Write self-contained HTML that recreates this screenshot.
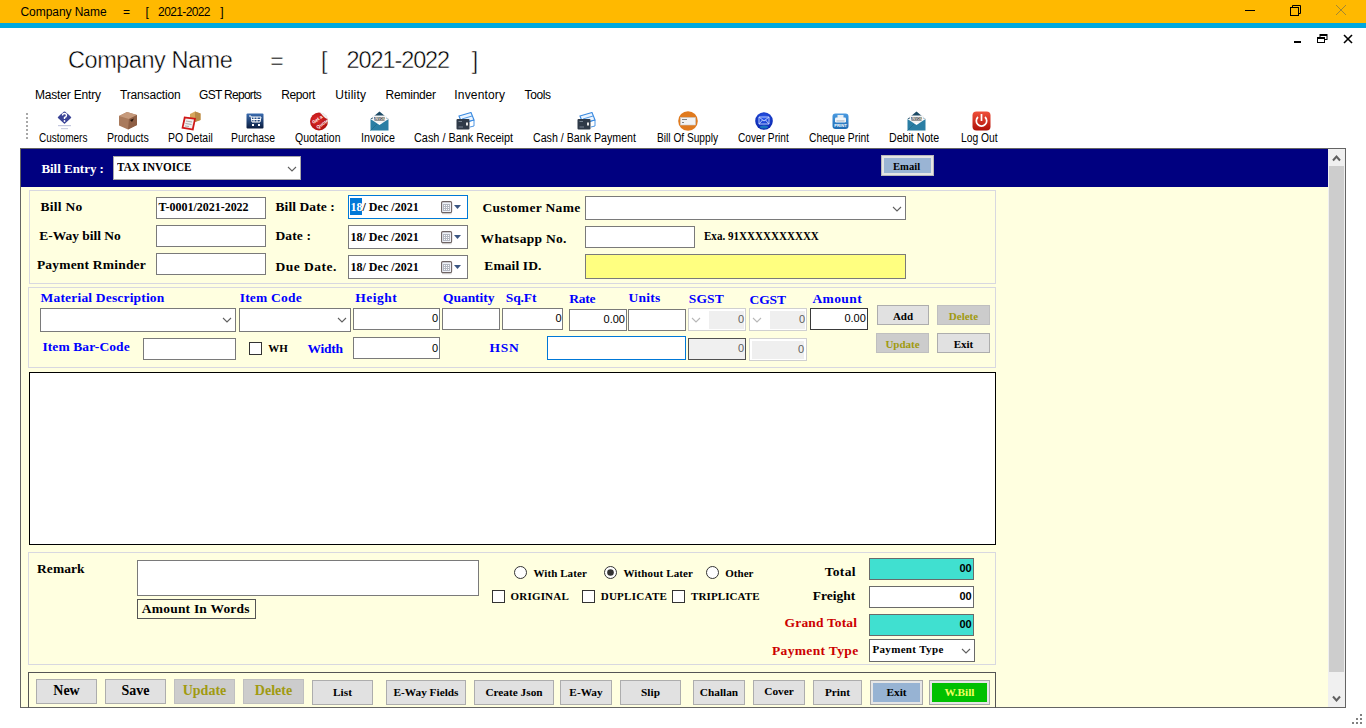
<!DOCTYPE html>
<html><head><meta charset="utf-8"><title>Bill Entry</title>
<style>
html,body{margin:0;padding:0;}
body{width:1366px;height:728px;position:relative;overflow:hidden;background:#fff;font-family:'Liberation Sans', sans-serif;}
.t{position:absolute;line-height:1;white-space:pre;}
.r{position:absolute;box-sizing:border-box;}
</style></head><body>
<div class="r" style="left:0px;top:0px;width:1366px;height:23px;background:#ffb900;"></div>
<div class="r" style="left:0px;top:23px;width:1366px;height:5px;background:#00a8de;"></div>
<div class="t" style="left:20.50px;top:5.84px;font-size:12px;font-family:'Liberation Sans', sans-serif;color:#000;letter-spacing:-0.057px;">Company Name</div>
<div class="t" style="left:123.00px;top:5.84px;font-size:12px;font-family:'Liberation Sans', sans-serif;color:#000;">=</div>
<div class="t" style="left:145.50px;top:5.84px;font-size:12px;font-family:'Liberation Sans', sans-serif;color:#000;">[</div>
<div class="t" style="left:158.10px;top:5.84px;font-size:12px;font-family:'Liberation Sans', sans-serif;color:#000;letter-spacing:-0.627px;">2021-2022</div>
<div class="t" style="left:220.20px;top:5.84px;font-size:12px;font-family:'Liberation Sans', sans-serif;color:#000;">]</div>
<div class="r" style="left:1245px;top:10px;width:10px;height:1px;background:#000;"></div>
<svg class="r" style="left:1289px;top:4px" width="13" height="13"><rect x="1.5" y="3.5" width="8" height="8" fill="none" stroke="#000" stroke-width="1"/><polyline points="3.5,3.5 3.5,1.5 11.5,1.5 11.5,9.5 9.5,9.5" fill="none" stroke="#000" stroke-width="1"/></svg>
<svg class="r" style="left:1335px;top:4px" width="12" height="12"><line x1="1" y1="1" x2="11" y2="11" stroke="#8a7a40" stroke-width="0.8"/><line x1="11" y1="1" x2="1" y2="11" stroke="#8a7a40" stroke-width="0.8"/></svg>
<div class="r" style="left:1294px;top:41px;width:7px;height:2px;background:#000;"></div>
<svg class="r" style="left:1317px;top:34px" width="11" height="9"><rect x="3" y="0.5" width="7" height="5" fill="#fff" stroke="#000" stroke-width="1"/><rect x="3" y="0" width="7" height="2" fill="#000"/><rect x="0.5" y="3.5" width="7" height="5" fill="#fff" stroke="#000" stroke-width="1"/><rect x="0.5" y="3" width="7" height="2" fill="#000"/></svg>
<svg class="r" style="left:1343px;top:34px" width="10" height="10"><line x1="1" y1="1" x2="9" y2="9" stroke="#000" stroke-width="1.6"/><line x1="9" y1="1" x2="1" y2="9" stroke="#000" stroke-width="1.6"/></svg>
<div class="t" style="left:68.00px;top:49.11px;font-size:23.5px;font-family:'Liberation Sans', sans-serif;color:#000;-webkit-text-stroke:0.45px #fff;letter-spacing:-0.456px;">Company Name</div>
<div class="t" style="left:270.20px;top:49.53px;font-size:23px;font-family:'Liberation Sans', sans-serif;color:#000;-webkit-text-stroke:0.45px #fff;">=</div>
<div class="t" style="left:321.00px;top:49.53px;font-size:23px;font-family:'Liberation Sans', sans-serif;color:#000;-webkit-text-stroke:0.45px #fff;">[</div>
<div class="t" style="left:346.50px;top:49.11px;font-size:23.5px;font-family:'Liberation Sans', sans-serif;color:#000;-webkit-text-stroke:0.45px #fff;letter-spacing:-1.089px;">2021-2022</div>
<div class="t" style="left:471.70px;top:49.53px;font-size:23px;font-family:'Liberation Sans', sans-serif;color:#000;-webkit-text-stroke:0.45px #fff;">]</div>
<div class="t" style="left:35.00px;top:88.84px;font-size:12px;font-family:'Liberation Sans', sans-serif;color:#000;letter-spacing:-0.183px;">Master Entry</div>
<div class="t" style="left:120.00px;top:88.84px;font-size:12px;font-family:'Liberation Sans', sans-serif;color:#000;letter-spacing:-0.158px;">Transaction</div>
<div class="t" style="left:199.00px;top:88.84px;font-size:12px;font-family:'Liberation Sans', sans-serif;color:#000;letter-spacing:-0.702px;">GST Reports</div>
<div class="t" style="left:281.30px;top:88.84px;font-size:12px;font-family:'Liberation Sans', sans-serif;color:#000;letter-spacing:-0.397px;">Report</div>
<div class="t" style="left:335.30px;top:88.84px;font-size:12px;font-family:'Liberation Sans', sans-serif;color:#000;letter-spacing:0.228px;">Utility</div>
<div class="t" style="left:385.60px;top:88.84px;font-size:12px;font-family:'Liberation Sans', sans-serif;color:#000;letter-spacing:-0.232px;">Reminder</div>
<div class="t" style="left:454.30px;top:88.84px;font-size:12px;font-family:'Liberation Sans', sans-serif;color:#000;letter-spacing:0.168px;">Inventory</div>
<div class="t" style="left:524.60px;top:88.84px;font-size:12px;font-family:'Liberation Sans', sans-serif;color:#000;letter-spacing:-0.403px;">Tools</div>
<div class="r" style="left:26px;top:113px;width:2px;height:2px;background:#a8a8a8;"></div>
<div class="r" style="left:26px;top:117px;width:2px;height:2px;background:#a8a8a8;"></div>
<div class="r" style="left:26px;top:121px;width:2px;height:2px;background:#a8a8a8;"></div>
<div class="r" style="left:26px;top:125px;width:2px;height:2px;background:#a8a8a8;"></div>
<div class="r" style="left:26px;top:129px;width:2px;height:2px;background:#a8a8a8;"></div>
<div class="r" style="left:26px;top:133px;width:2px;height:2px;background:#a8a8a8;"></div>
<div class="r" style="left:26px;top:137px;width:2px;height:2px;background:#a8a8a8;"></div>
<div class="t" style="left:38.90px;top:131.59px;font-size:12.3px;font-family:'Liberation Sans', sans-serif;color:#000;transform:scaleX(0.8145);transform-origin:0 0;">Customers</div>
<div class="t" style="left:106.74px;top:131.59px;font-size:12.3px;font-family:'Liberation Sans', sans-serif;color:#000;transform:scaleX(0.8611);transform-origin:0 0;">Products</div>
<div class="t" style="left:167.95px;top:131.59px;font-size:12.3px;font-family:'Liberation Sans', sans-serif;color:#000;transform:scaleX(0.8509);transform-origin:0 0;">PO Detail</div>
<div class="t" style="left:231.45px;top:131.59px;font-size:12.3px;font-family:'Liberation Sans', sans-serif;color:#000;transform:scaleX(0.8491);transform-origin:0 0;">Purchase</div>
<div class="t" style="left:295.40px;top:131.59px;font-size:12.3px;font-family:'Liberation Sans', sans-serif;color:#000;transform:scaleX(0.8526);transform-origin:0 0;">Quotation</div>
<div class="t" style="left:360.53px;top:131.59px;font-size:12.3px;font-family:'Liberation Sans', sans-serif;color:#000;transform:scaleX(0.8709);transform-origin:0 0;">Invoice</div>
<div class="t" style="left:414.30px;top:131.59px;font-size:12.3px;font-family:'Liberation Sans', sans-serif;color:#000;transform:scaleX(0.8839);transform-origin:0 0;">Cash / Bank Receipt</div>
<div class="t" style="left:533.40px;top:131.59px;font-size:12.3px;font-family:'Liberation Sans', sans-serif;color:#000;transform:scaleX(0.8660);transform-origin:0 0;">Cash / Bank Payment</div>
<div class="t" style="left:656.57px;top:131.59px;font-size:12.3px;font-family:'Liberation Sans', sans-serif;color:#000;transform:scaleX(0.8267);transform-origin:0 0;">Bill Of Supply</div>
<div class="t" style="left:737.80px;top:131.59px;font-size:12.3px;font-family:'Liberation Sans', sans-serif;color:#000;transform:scaleX(0.8247);transform-origin:0 0;">Cover Print</div>
<div class="t" style="left:808.50px;top:131.59px;font-size:12.3px;font-family:'Liberation Sans', sans-serif;color:#000;transform:scaleX(0.8361);transform-origin:0 0;">Cheque Print</div>
<div class="t" style="left:888.64px;top:131.59px;font-size:12.3px;font-family:'Liberation Sans', sans-serif;color:#000;transform:scaleX(0.8645);transform-origin:0 0;">Debit Note</div>
<div class="t" style="left:961.36px;top:131.59px;font-size:12.3px;font-family:'Liberation Sans', sans-serif;color:#000;transform:scaleX(0.8376);transform-origin:0 0;">Log Out</div>
<svg class="r" style="left:57px;top:111px" width="15" height="20" viewBox="0 0 15 20"><path d="M7.5 0.5 Q8.5 0.5 14 6 Q14.5 6.5 14 7 L8 12.5 Q7.5 13 7 12.5 L1 7 Q0.5 6.5 1 6 Q6.5 0.5 7.5 0.5 Z" fill="#3a4396"/><path d="M5.5 4.5 Q5.5 2.5 7.5 2.5 Q9.5 2.5 9.5 4.5 Q9.5 6 7.5 6.5 L7.5 8" fill="none" stroke="#fff" stroke-width="1.4"/><circle cx="7.5" cy="10" r="0.9" fill="#fff"/><rect x="1" y="14" width="13" height="1.2" fill="#c4c8de"/><rect x="4" y="17" width="7" height="1.2" fill="#ccd0e2"/></svg>
<svg class="r" style="left:118px;top:111px" width="20" height="19" viewBox="0 0 20 19"><path d="M1 5 L9 1 L19 4 L19 14 L10 18.5 L1 14.5 Z" fill="#a97a5c"/><path d="M1 5 L9 1 L19 4 L11 8 Z" fill="#c69a7c"/><path d="M11 8 L19 4 L19 14 L10 18.5 Z" fill="#8e5f44"/><path d="M12 9 L16 7.5 L14 11 Z" fill="#2a1a10"/></svg>
<svg class="r" style="left:181px;top:111px" width="20" height="20" viewBox="0 0 20 20"><path d="M9 3 L14 0.5 L19.5 2.5 L19.5 9 L14 11 L9 9 Z" fill="#d6a65c"/><path d="M14 0.5 L19.5 2.5 L19.5 9 L14 11 Z" fill="#b88a48"/><path d="M3 5.5 L15 7 L12.5 19.5 L0.5 17.5 Z" fill="#d01818"/><path d="M4.5 7.5 L13 8.5 L11 17.5 L2.5 16 Z" fill="#f0f0f0"/><path d="M5 10 L11 11 M4.5 12.5 L10.5 13.5 M4 15 L8 15.5" stroke="#999" stroke-width="0.8"/></svg>
<svg class="r" style="left:246px;top:113px" width="18" height="16" viewBox="0 0 18 16"><defs><linearGradient id="gp" x1="0" y1="0" x2="0" y2="1"><stop offset="0" stop-color="#3a6cb0"/><stop offset="1" stop-color="#0a1c3e"/></linearGradient></defs><rect x="0.5" y="0.5" width="17" height="15" rx="1" fill="url(#gp)"/><path d="M3 3 H5 L6 9 H14 L15 4 H5.5 M8 4 V9 M11 4 V9 M5.8 6.5 H14.5" fill="none" stroke="#fff" stroke-width="1"/><rect x="6" y="11" width="2" height="2" fill="#fff"/><rect x="12" y="11" width="2" height="2" fill="#fff"/></svg>
<svg class="r" style="left:309px;top:112px" width="20" height="19" viewBox="0 0 20 19"><defs><radialGradient id="gq" cx="0.4" cy="0.4" r="0.7"><stop offset="0" stop-color="#e02a2a"/><stop offset="1" stop-color="#a80c0c"/></radialGradient></defs><circle cx="10" cy="9.5" r="9" fill="url(#gq)"/><path d="M10.5 0.6 Q17.5 0.8 19.2 7.5 Q16 6.5 14 4 Q12.5 2 10.5 0.6 Z" fill="#eeeeee"/><text x="3.2" y="10" font-size="4.6" font-weight="bold" fill="#fff" font-family="Liberation Sans" transform="rotate(-35 7 9)">Get a</text><text x="7" y="15" font-size="4.6" font-weight="bold" fill="#fff" font-family="Liberation Sans" transform="rotate(-35 11 13)">Quote</text></svg>
<svg class="r" style="left:370px;top:111px" width="19" height="20" viewBox="0 0 19 20"><path d="M0.5 8 L9.5 0.5 L18.5 8 Z" fill="#1c4a66"/><path d="M2.5 4.5 H16.5 V12 H2.5 Z" fill="#f4f4f4"/><path d="M4 6 H15 L14.5 9.5 H4.5 Z" fill="#3a3a3a"/><text x="4.6" y="9.2" font-size="3.4" font-weight="bold" fill="#fff" font-family="Liberation Sans">INVOICE</text><path d="M0.5 8 L9.5 14 L18.5 8 V19.5 H0.5 Z" fill="#2a7ea4"/><path d="M0.5 19.5 L7 13" stroke="#1f6a8c" stroke-width="0.8"/></svg>
<svg class="r" style="left:456px;top:112px" width="19" height="18" viewBox="0 0 19 18"><path d="M3 4 L15 0.5 L18 8 L6 11.5 Z" fill="#eaf4ff" stroke="#3a8ae0" stroke-width="1.1"/><path d="M6 7 L16 4" stroke="#3a8ae0" stroke-width="0.9"/><rect x="0.5" y="7" width="13" height="10.5" rx="1" fill="#2f3a48"/><rect x="10" y="10.5" width="2" height="3" fill="#e8e8e8"/><path d="M2.5 9.5 H6 M2.5 15 H7" stroke="#8a96a4" stroke-width="0.8"/><path d="M14 9 L18 8 V14 L14 15" fill="none" stroke="#3a8ae0" stroke-width="0.9"/></svg>
<svg class="r" style="left:577px;top:112px" width="19" height="18" viewBox="0 0 19 18"><path d="M3 4 L15 0.5 L18 8 L6 11.5 Z" fill="#eaf4ff" stroke="#3a8ae0" stroke-width="1.1"/><path d="M6 7 L16 4" stroke="#3a8ae0" stroke-width="0.9"/><rect x="0.5" y="7" width="13" height="10.5" rx="1" fill="#2f3a48"/><rect x="10" y="10.5" width="2" height="3" fill="#e8e8e8"/><path d="M2.5 9.5 H6 M2.5 15 H7" stroke="#8a96a4" stroke-width="0.8"/><path d="M14 9 L18 8 V14 L14 15" fill="none" stroke="#3a8ae0" stroke-width="0.9"/></svg>
<svg class="r" style="left:678px;top:111px" width="20" height="20" viewBox="0 0 20 20"><circle cx="10" cy="10" r="9.8" fill="#e07a1e"/><rect x="2.5" y="6.5" width="15" height="7.5" fill="#f2f2f2" stroke="#c8c8c8" stroke-width="0.6"/><rect x="4" y="8" width="5" height="0.9" fill="#777"/><rect x="4" y="11" width="2" height="0.9" fill="#777"/></svg>
<svg class="r" style="left:755px;top:112px" width="18" height="18" viewBox="0 0 18 18"><defs><radialGradient id="gc" cx="0.5" cy="0.35" r="0.6"><stop offset="0" stop-color="#2f5cf0"/><stop offset="1" stop-color="#0a28b0"/></radialGradient></defs><circle cx="9" cy="9" r="8.8" fill="url(#gc)"/><path d="M4 5 H14 V12 H4 Z M4 5 L9 9 L14 5 M4 12 L7.5 8 M14 12 L10.5 8" fill="none" stroke="#c8d8ff" stroke-width="0.9"/><ellipse cx="9" cy="15" rx="4" ry="1.5" fill="#20a0c0" opacity="0.6"/></svg>
<svg class="r" style="left:832px;top:113px" width="17" height="16" viewBox="0 0 17 16"><defs><linearGradient id="gcp" x1="0" y1="0" x2="0" y2="1"><stop offset="0" stop-color="#4a9ae0"/><stop offset="1" stop-color="#1f6cb4"/></linearGradient></defs><rect x="0.5" y="0.5" width="16" height="15.5" rx="3" fill="url(#gcp)"/><rect x="5.5" y="2" width="6" height="3" fill="#e8eef4"/><rect x="3" y="4.5" width="11" height="5" rx="1.2" fill="#f2f5f8"/><rect x="4.5" y="7.5" width="8" height="0.9" fill="#9ab"/><text x="2.2" y="14.2" font-size="4.2" font-weight="bold" fill="#fff" font-family="Liberation Sans">PRINT</text></svg>
<svg class="r" style="left:907px;top:111px" width="19" height="20" viewBox="0 0 19 20"><path d="M0.5 8 L9.5 0.5 L18.5 8 Z" fill="#1c4a66"/><path d="M2.5 4.5 H16.5 V12 H2.5 Z" fill="#f4f4f4"/><path d="M4 6 H15 L14.5 9.5 H4.5 Z" fill="#3a3a3a"/><text x="4.6" y="9.2" font-size="3.4" font-weight="bold" fill="#fff" font-family="Liberation Sans">INVOICE</text><path d="M0.5 8 L9.5 14 L18.5 8 V19.5 H0.5 Z" fill="#2a7ea4"/><path d="M0.5 19.5 L7 13" stroke="#1f6a8c" stroke-width="0.8"/></svg>
<svg class="r" style="left:972px;top:111px" width="19" height="20" viewBox="0 0 19 20"><defs><linearGradient id="gl" x1="0" y1="0" x2="0" y2="1"><stop offset="0" stop-color="#f0503a"/><stop offset="1" stop-color="#b01008"/></linearGradient></defs><rect x="0.5" y="0.5" width="18" height="19" rx="4" fill="url(#gl)"/><path d="M6 6 A5.2 5.2 0 1 0 13 6" fill="none" stroke="#fff" stroke-width="1.7"/><line x1="9.5" y1="3" x2="9.5" y2="10" stroke="#fff" stroke-width="1.7"/></svg>
<div class="r" style="left:20px;top:148px;width:1326px;height:560px;background:#ffffe0;border:1px solid #646464;"></div>
<div class="r" style="left:21px;top:149px;width:1307px;height:38px;background:#000080;"></div>
<div class="r" style="left:1328px;top:149px;width:17px;height:558px;background:#f0f0f0;"></div>
<div class="r" style="left:1329px;top:166px;width:15px;height:506px;background:#cdcdcd;"></div>
<svg class="r" style="left:1332px;top:154px" width="9" height="8"><polyline points="1,6.5 4.5,2.5 8,6.5" fill="none" stroke="#606060" stroke-width="2"/></svg>
<svg class="r" style="left:1332px;top:695px" width="9" height="8"><polyline points="1,1.5 4.5,5.5 8,1.5" fill="none" stroke="#606060" stroke-width="2"/></svg>
<div class="r" style="left:1360px;top:714px;width:2px;height:2px;background:#808080;"></div>
<div class="r" style="left:1356px;top:718px;width:2px;height:2px;background:#808080;"></div>
<div class="r" style="left:1360px;top:718px;width:2px;height:2px;background:#808080;"></div>
<div class="r" style="left:1352px;top:722px;width:2px;height:2px;background:#808080;"></div>
<div class="r" style="left:1356px;top:722px;width:2px;height:2px;background:#808080;"></div>
<div class="r" style="left:1360px;top:722px;width:2px;height:2px;background:#808080;"></div>
<div class="t" style="left:41.40px;top:162.11px;font-size:13px;font-family:'Liberation Serif', serif;font-weight:bold;color:#fff;letter-spacing:-0.028px;">Bill Entry :</div>
<div class="r" style="left:113px;top:156px;width:188px;height:24px;background:#fff;border:1px solid #a8a8a8;"></div>
<div class="t" style="left:116.90px;top:162.37px;font-size:11.5px;font-family:'Liberation Serif', serif;font-weight:bold;color:#000;transform:scaleX(0.9742);transform-origin:0 0;">TAX INVOICE</div>
<svg class="r" style="left:287.0px;top:166.0px" width="10" height="6"><polyline points="1,1 5.0,5 9,1" fill="none" stroke="#606060" stroke-width="1.1"/></svg>
<div class="r" style="left:881px;top:155px;width:53px;height:21px;background:#e4e4e4;border:1px solid #b8b8b8;"></div>
<div class="r" style="left:884px;top:158px;width:47px;height:15px;background:#9ab4d4;"></div>
<div class="t" style="left:892.60px;top:160.95px;font-size:10.8px;font-family:'Liberation Serif', serif;font-weight:bold;color:#000;transform:scaleX(0.9821);transform-origin:0 0;">Email</div>
<div class="r" style="left:29px;top:190px;width:967px;height:94px;background:transparent;border:1px solid #d8d8e0;"></div>
<div class="r" style="left:28px;top:287px;width:968px;height:81px;background:transparent;border:1px solid #d8d8e0;"></div>
<div class="r" style="left:28px;top:552px;width:968px;height:113px;background:transparent;border:1px solid #d8d8e0;"></div>
<div class="t" style="left:40.40px;top:199.69px;font-size:13.5px;font-family:'Liberation Serif', serif;font-weight:bold;color:#000;letter-spacing:0.287px;">Bill No</div>
<div class="t" style="left:39.30px;top:228.69px;font-size:13.5px;font-family:'Liberation Serif', serif;font-weight:bold;color:#000;letter-spacing:-0.018px;">E-Way bill No</div>
<div class="t" style="left:36.90px;top:257.69px;font-size:13.5px;font-family:'Liberation Serif', serif;font-weight:bold;color:#000;letter-spacing:0.199px;">Payment Rminder</div>
<div class="r" style="left:156px;top:197px;width:110px;height:22px;background:#fff;border:1px solid #7a7a7a;box-sizing:border-box;"></div>
<div class="r" style="left:156px;top:225px;width:110px;height:22px;background:#fff;border:1px solid #7a7a7a;box-sizing:border-box;"></div>
<div class="r" style="left:156px;top:253px;width:110px;height:22px;background:#fff;border:1px solid #7a7a7a;box-sizing:border-box;"></div>
<div class="t" style="left:158.60px;top:200.95px;font-size:12px;font-family:'Liberation Serif', serif;font-weight:bold;color:#000;letter-spacing:-0.015px;">T-0001/2021-2022</div>
<div class="t" style="left:275.50px;top:199.69px;font-size:13.5px;font-family:'Liberation Serif', serif;font-weight:bold;color:#000;letter-spacing:0.081px;">Bill Date :</div>
<div class="t" style="left:275.50px;top:228.69px;font-size:13.5px;font-family:'Liberation Serif', serif;font-weight:bold;color:#000;letter-spacing:0.108px;">Date :</div>
<div class="t" style="left:275.50px;top:259.69px;font-size:13.5px;font-family:'Liberation Serif', serif;font-weight:bold;color:#000;letter-spacing:0.474px;">Due Date.</div>
<div class="r" style="left:348px;top:195px;width:120px;height:24px;background:#fff;border:1px solid #0078d7;box-sizing:border-box;"></div>
<div class="r" style="left:350px;top:198px;width:12px;height:17px;background:#0078d7;"></div>
<div class="t" style="left:350.40px;top:200.95px;font-size:12px;font-family:'Liberation Serif', serif;font-weight:bold;color:#000;letter-spacing:0.034px;"><span style="color:#fff">18</span>/ Dec /2021</div>
<svg class="r" style="left:441px;top:201px" width="12" height="14"><rect x="1" y="12" width="10" height="1.5" fill="#e8e8e8"/><rect x="0.6" y="0.6" width="10" height="11" rx="1.2" fill="#eef1f8" stroke="#6e6464" stroke-width="1.1"/><rect x="2" y="3" width="7" height="7" fill="#b4b8c2"/><rect x="3" y="4" width="1" height="1" fill="#fff"/><rect x="3" y="6" width="1" height="1" fill="#fff"/><rect x="3" y="8" width="1" height="1" fill="#fff"/><rect x="5" y="4" width="1" height="1" fill="#fff"/><rect x="5" y="6" width="1" height="1" fill="#fff"/><rect x="5" y="8" width="1" height="1" fill="#fff"/><rect x="7" y="4" width="1" height="1" fill="#fff"/><rect x="7" y="6" width="1" height="1" fill="#fff"/><rect x="7" y="8" width="1" height="1" fill="#fff"/></svg>
<svg class="r" style="left:454px;top:205px" width="8" height="5"><polygon points="0,0 7,0 3.5,4" fill="#3a5582"/></svg>
<div class="r" style="left:348px;top:225px;width:120px;height:24px;background:#fff;border:1px solid #7a7a7a;box-sizing:border-box;"></div>
<div class="t" style="left:350.40px;top:230.95px;font-size:12px;font-family:'Liberation Serif', serif;font-weight:bold;color:#000;letter-spacing:0.034px;">18/ Dec /2021</div>
<svg class="r" style="left:441px;top:231px" width="12" height="14"><rect x="1" y="12" width="10" height="1.5" fill="#e8e8e8"/><rect x="0.6" y="0.6" width="10" height="11" rx="1.2" fill="#eef1f8" stroke="#6e6464" stroke-width="1.1"/><rect x="2" y="3" width="7" height="7" fill="#b4b8c2"/><rect x="3" y="4" width="1" height="1" fill="#fff"/><rect x="3" y="6" width="1" height="1" fill="#fff"/><rect x="3" y="8" width="1" height="1" fill="#fff"/><rect x="5" y="4" width="1" height="1" fill="#fff"/><rect x="5" y="6" width="1" height="1" fill="#fff"/><rect x="5" y="8" width="1" height="1" fill="#fff"/><rect x="7" y="4" width="1" height="1" fill="#fff"/><rect x="7" y="6" width="1" height="1" fill="#fff"/><rect x="7" y="8" width="1" height="1" fill="#fff"/></svg>
<svg class="r" style="left:454px;top:235px" width="8" height="5"><polygon points="0,0 7,0 3.5,4" fill="#3a5582"/></svg>
<div class="r" style="left:348px;top:255px;width:120px;height:24px;background:#fff;border:1px solid #7a7a7a;box-sizing:border-box;"></div>
<div class="t" style="left:350.40px;top:260.95px;font-size:12px;font-family:'Liberation Serif', serif;font-weight:bold;color:#000;letter-spacing:0.034px;">18/ Dec /2021</div>
<svg class="r" style="left:441px;top:261px" width="12" height="14"><rect x="1" y="12" width="10" height="1.5" fill="#e8e8e8"/><rect x="0.6" y="0.6" width="10" height="11" rx="1.2" fill="#eef1f8" stroke="#6e6464" stroke-width="1.1"/><rect x="2" y="3" width="7" height="7" fill="#b4b8c2"/><rect x="3" y="4" width="1" height="1" fill="#fff"/><rect x="3" y="6" width="1" height="1" fill="#fff"/><rect x="3" y="8" width="1" height="1" fill="#fff"/><rect x="5" y="4" width="1" height="1" fill="#fff"/><rect x="5" y="6" width="1" height="1" fill="#fff"/><rect x="5" y="8" width="1" height="1" fill="#fff"/><rect x="7" y="4" width="1" height="1" fill="#fff"/><rect x="7" y="6" width="1" height="1" fill="#fff"/><rect x="7" y="8" width="1" height="1" fill="#fff"/></svg>
<svg class="r" style="left:454px;top:265px" width="8" height="5"><polygon points="0,0 7,0 3.5,4" fill="#3a5582"/></svg>
<div class="t" style="left:482.40px;top:200.69px;font-size:13.5px;font-family:'Liberation Serif', serif;font-weight:bold;color:#000;letter-spacing:0.333px;">Customer Name</div>
<div class="t" style="left:480.60px;top:231.69px;font-size:13.5px;font-family:'Liberation Serif', serif;font-weight:bold;color:#000;letter-spacing:0.305px;">Whatsapp No.</div>
<div class="t" style="left:484.30px;top:258.69px;font-size:13.5px;font-family:'Liberation Serif', serif;font-weight:bold;color:#000;letter-spacing:0.103px;">Email ID.</div>
<div class="r" style="left:585px;top:196px;width:321px;height:24px;background:#fff;border:1px solid #7a7a7a;box-sizing:border-box;"></div>
<svg class="r" style="left:892.0px;top:205.5px" width="10" height="6"><polyline points="1,1 5.0,5 9,1" fill="none" stroke="#606060" stroke-width="1.1"/></svg>
<div class="r" style="left:585px;top:226px;width:110px;height:22px;background:#fff;border:1px solid #7a7a7a;box-sizing:border-box;"></div>
<div class="t" style="left:703.60px;top:231.12px;font-size:11.8px;font-family:'Liberation Serif', serif;font-weight:bold;color:#000;transform:scaleX(0.9371);transform-origin:0 0;">Exa. 91XXXXXXXXXX</div>
<div class="r" style="left:585px;top:254px;width:321px;height:25px;background:#ffff80;border:1px solid #7a7a7a;box-sizing:border-box;"></div>
<div class="t" style="left:40.60px;top:290.69px;font-size:13.5px;font-family:'Liberation Serif', serif;font-weight:bold;color:#0000ff;letter-spacing:0.177px;">Material Description</div>
<div class="t" style="left:239.70px;top:290.69px;font-size:13.5px;font-family:'Liberation Serif', serif;font-weight:bold;color:#0000ff;letter-spacing:0.204px;">Item Code</div>
<div class="t" style="left:355.30px;top:290.69px;font-size:13.5px;font-family:'Liberation Serif', serif;font-weight:bold;color:#0000ff;letter-spacing:0.480px;">Height</div>
<div class="t" style="left:443.00px;top:290.69px;font-size:13.5px;font-family:'Liberation Serif', serif;font-weight:bold;color:#0000ff;letter-spacing:-0.044px;">Quantity</div>
<div class="t" style="left:505.80px;top:290.69px;font-size:13.5px;font-family:'Liberation Serif', serif;font-weight:bold;color:#0000ff;letter-spacing:-0.109px;">Sq.Ft</div>
<div class="t" style="left:569.30px;top:291.69px;font-size:13.5px;font-family:'Liberation Serif', serif;font-weight:bold;color:#0000ff;letter-spacing:-0.232px;">Rate</div>
<div class="t" style="left:628.50px;top:290.69px;font-size:13.5px;font-family:'Liberation Serif', serif;font-weight:bold;color:#0000ff;letter-spacing:0.224px;">Units</div>
<div class="t" style="left:688.70px;top:291.69px;font-size:13.5px;font-family:'Liberation Serif', serif;font-weight:bold;color:#0000ff;letter-spacing:0.194px;">SGST</div>
<div class="t" style="left:749.60px;top:292.69px;font-size:13.5px;font-family:'Liberation Serif', serif;font-weight:bold;color:#0000ff;letter-spacing:-0.153px;">CGST</div>
<div class="t" style="left:812.40px;top:291.69px;font-size:13.5px;font-family:'Liberation Serif', serif;font-weight:bold;color:#0000ff;letter-spacing:0.408px;">Amount</div>
<div class="t" style="left:42.40px;top:339.69px;font-size:13.5px;font-family:'Liberation Serif', serif;font-weight:bold;color:#0000ff;letter-spacing:0.099px;">Item Bar-Code</div>
<div class="t" style="left:307.60px;top:341.69px;font-size:13.5px;font-family:'Liberation Serif', serif;font-weight:bold;color:#0000ff;letter-spacing:-0.278px;">Width</div>
<div class="t" style="left:489.40px;top:340.69px;font-size:13.5px;font-family:'Liberation Serif', serif;font-weight:bold;color:#0000ff;letter-spacing:0.746px;">HSN</div>
<div class="r" style="left:40px;top:308px;width:196px;height:24px;background:#fff;border:1px solid #7a7a7a;box-sizing:border-box;"></div>
<svg class="r" style="left:222.0px;top:317.0px" width="10" height="6"><polyline points="1,1 5.0,5 9,1" fill="none" stroke="#606060" stroke-width="1.1"/></svg>
<div class="r" style="left:239px;top:308px;width:112px;height:24px;background:#fff;border:1px solid #7a7a7a;box-sizing:border-box;"></div>
<svg class="r" style="left:337.0px;top:317.0px" width="10" height="6"><polyline points="1,1 5.0,5 9,1" fill="none" stroke="#606060" stroke-width="1.1"/></svg>
<div class="r" style="left:353px;top:308px;width:87px;height:22px;background:#fff;border:1px solid #7a7a7a;box-sizing:border-box;"></div>
<div class="t" style="right:928.00px;top:312.69px;font-size:11px;font-family:'Liberation Sans', sans-serif;color:#000;">0</div>
<div class="r" style="left:442px;top:308px;width:58px;height:22px;background:#fff;border:1px solid #7a7a7a;box-sizing:border-box;"></div>
<div class="r" style="left:502px;top:308px;width:61px;height:22px;background:#fff;border:1px solid #7a7a7a;box-sizing:border-box;"></div>
<div class="t" style="right:804.50px;top:312.69px;font-size:11px;font-family:'Liberation Sans', sans-serif;color:#000;">0</div>
<div class="r" style="left:569px;top:309px;width:58px;height:22px;background:#fff;border:1px solid #7a7a7a;box-sizing:border-box;"></div>
<div class="t" style="right:741.00px;top:313.69px;font-size:11px;font-family:'Liberation Sans', sans-serif;color:#000;">0.00</div>
<div class="r" style="left:628px;top:309px;width:58px;height:22px;background:#fff;border:1px solid #7a7a7a;box-sizing:border-box;"></div>
<div class="r" style="left:688px;top:308px;width:58px;height:23px;background:#fff;border:1px solid #d0d0d0;box-sizing:border-box;"></div>
<div class="r" style="left:709px;top:311px;width:35px;height:18px;background:#efefef;"></div>
<svg class="r" style="left:691.0px;top:316.5px" width="10" height="6"><polyline points="1,1 5.0,5 9,1" fill="none" stroke="#b8b8b8" stroke-width="1.1"/></svg>
<div class="t" style="right:622.00px;top:313.69px;font-size:11px;font-family:'Liberation Sans', sans-serif;color:#606060;">0</div>
<div class="r" style="left:749px;top:308px;width:58px;height:23px;background:#fff;border:1px solid #d0d0d0;box-sizing:border-box;"></div>
<div class="r" style="left:770px;top:311px;width:35px;height:18px;background:#efefef;"></div>
<svg class="r" style="left:752.0px;top:316.5px" width="10" height="6"><polyline points="1,1 5.0,5 9,1" fill="none" stroke="#b8b8b8" stroke-width="1.1"/></svg>
<div class="t" style="right:561.00px;top:313.69px;font-size:11px;font-family:'Liberation Sans', sans-serif;color:#606060;">0</div>
<div class="r" style="left:810px;top:308px;width:58px;height:22px;background:#fff;border:1px solid #3a3a3a;"></div>
<div class="t" style="right:500.20px;top:312.69px;font-size:11px;font-family:'Liberation Sans', sans-serif;color:#000;">0.00</div>
<div class="r" style="left:877px;top:305px;width:52px;height:20px;background:#e1e1e1;border:1px solid #adadad;box-sizing:border-box;"></div>
<div class="t" style="left:603.00px;width:600px;text-align:center;top:310.79px;font-size:11px;font-family:'Liberation Serif', serif;font-weight:bold;color:#000;">Add</div>
<div class="r" style="left:937px;top:305px;width:53px;height:20px;background:#cccccc;border:1px solid #bfbfbf;box-sizing:border-box;"></div>
<div class="t" style="left:663.50px;width:600px;text-align:center;top:310.79px;font-size:11px;font-family:'Liberation Serif', serif;font-weight:bold;color:#a09a10;">Delete</div>
<div class="r" style="left:876px;top:333px;width:53px;height:20px;background:#cccccc;border:1px solid #bfbfbf;box-sizing:border-box;"></div>
<div class="t" style="left:602.50px;width:600px;text-align:center;top:338.79px;font-size:11px;font-family:'Liberation Serif', serif;font-weight:bold;color:#a09a10;">Update</div>
<div class="r" style="left:937px;top:333px;width:53px;height:20px;background:#e1e1e1;border:1px solid #adadad;box-sizing:border-box;"></div>
<div class="t" style="left:663.50px;width:600px;text-align:center;top:338.79px;font-size:11px;font-family:'Liberation Serif', serif;font-weight:bold;color:#000;">Exit</div>
<div class="r" style="left:143px;top:338px;width:93px;height:22px;background:#fff;border:1px solid #7a7a7a;box-sizing:border-box;"></div>
<div class="r" style="left:249px;top:342px;width:13px;height:13px;background:#fff;border:1px solid #333;box-sizing:border-box;"></div>
<div class="t" style="left:268.20px;top:342.79px;font-size:11px;font-family:'Liberation Serif', serif;font-weight:bold;color:#000;">WH</div>
<div class="r" style="left:353px;top:337px;width:87px;height:22px;background:#fff;border:1px solid #7a7a7a;box-sizing:border-box;"></div>
<div class="t" style="right:928.00px;top:342.69px;font-size:11px;font-family:'Liberation Sans', sans-serif;color:#000;">0</div>
<div class="r" style="left:547px;top:336px;width:139px;height:24px;background:#fff;border:1px solid #0078d7;box-sizing:border-box;"></div>
<div class="r" style="left:688px;top:338px;width:58px;height:22px;background:#f0f0f0;border:1px solid #505050;box-sizing:border-box;"></div>
<div class="t" style="right:622.00px;top:342.69px;font-size:11px;font-family:'Liberation Sans', sans-serif;color:#606060;">0</div>
<div class="r" style="left:749px;top:338px;width:58px;height:23px;background:#fff;border:1px solid #d0d0d0;box-sizing:border-box;"></div>
<div class="r" style="left:752px;top:341px;width:52px;height:18px;background:#efefef;"></div>
<div class="t" style="right:562.00px;top:343.69px;font-size:11px;font-family:'Liberation Sans', sans-serif;color:#606060;">0</div>
<div class="r" style="left:29px;top:372px;width:967px;height:173px;background:#fff;border:1px solid #000;box-sizing:border-box;"></div>
<div class="t" style="left:37.00px;top:561.69px;font-size:13.5px;font-family:'Liberation Serif', serif;font-weight:bold;color:#000;letter-spacing:0.074px;">Remark</div>
<div class="r" style="left:137px;top:560px;width:342px;height:36px;background:#fff;border:1px solid #7a7a7a;box-sizing:border-box;"></div>
<div class="r" style="left:137px;top:599px;width:119px;height:20px;background:transparent;border:1px solid #555;box-sizing:border-box;"></div>
<div class="t" style="left:141.80px;top:601.69px;font-size:13.5px;font-family:'Liberation Serif', serif;font-weight:bold;color:#000;letter-spacing:0.209px;">Amount In Words</div>
<svg class="r" style="left:514px;top:566px" width="13" height="13"><circle cx="6.5" cy="6.5" r="6" fill="#fff" stroke="#333" stroke-width="1"/></svg>
<svg class="r" style="left:604px;top:566px" width="13" height="13"><circle cx="6.5" cy="6.5" r="6" fill="#fff" stroke="#333" stroke-width="1"/><circle cx="6.5" cy="6.5" r="3.3" fill="#333"/></svg>
<svg class="r" style="left:706px;top:566px" width="13" height="13"><circle cx="6.5" cy="6.5" r="6" fill="#fff" stroke="#333" stroke-width="1"/></svg>
<div class="t" style="left:533.40px;top:567.79px;font-size:11px;font-family:'Liberation Serif', serif;font-weight:bold;color:#000;letter-spacing:0.081px;">With Later</div>
<div class="t" style="left:623.40px;top:567.79px;font-size:11px;font-family:'Liberation Serif', serif;font-weight:bold;color:#000;letter-spacing:0.137px;">Without Later</div>
<div class="t" style="left:725.30px;top:567.79px;font-size:11px;font-family:'Liberation Serif', serif;font-weight:bold;color:#000;">Other</div>
<div class="r" style="left:492px;top:590px;width:13px;height:13px;background:#fff;border:1px solid #333;box-sizing:border-box;"></div>
<div class="t" style="left:510.50px;top:590.79px;font-size:11px;font-family:'Liberation Serif', serif;font-weight:bold;color:#000;letter-spacing:0.199px;">ORIGINAL</div>
<div class="r" style="left:582px;top:590px;width:13px;height:13px;background:#fff;border:1px solid #333;box-sizing:border-box;"></div>
<div class="t" style="left:600.70px;top:590.79px;font-size:11px;font-family:'Liberation Serif', serif;font-weight:bold;color:#000;letter-spacing:0.271px;">DUPLICATE</div>
<div class="r" style="left:672px;top:590px;width:13px;height:13px;background:#fff;border:1px solid #333;box-sizing:border-box;"></div>
<div class="t" style="left:691.00px;top:590.79px;font-size:11px;font-family:'Liberation Serif', serif;font-weight:bold;color:#000;letter-spacing:0.110px;">TRIPLICATE</div>
<div class="t" style="left:824.70px;top:564.69px;font-size:13.5px;font-family:'Liberation Serif', serif;font-weight:bold;color:#000;letter-spacing:0.310px;">Total</div>
<div class="t" style="left:812.70px;top:588.69px;font-size:13.5px;font-family:'Liberation Serif', serif;font-weight:bold;color:#000;letter-spacing:0.001px;">Freight</div>
<div class="t" style="left:784.60px;top:615.69px;font-size:13.5px;font-family:'Liberation Serif', serif;font-weight:bold;color:#cc0000;letter-spacing:0.151px;">Grand Total</div>
<div class="t" style="left:772.00px;top:643.69px;font-size:13.5px;font-family:'Liberation Serif', serif;font-weight:bold;color:#cc0000;letter-spacing:0.343px;">Payment Type</div>
<div class="r" style="left:869px;top:558px;width:105px;height:22px;background:#40e0d0;border:1px solid #6a6a6a;box-sizing:border-box;"></div>
<div class="t" style="right:394.30px;top:562.69px;font-size:11px;font-family:'Liberation Sans', sans-serif;font-weight:bold;color:#000;">00</div>
<div class="r" style="left:869px;top:586px;width:105px;height:22px;background:#fff;border:1px solid #6a6a6a;box-sizing:border-box;"></div>
<div class="t" style="right:394.30px;top:590.69px;font-size:11px;font-family:'Liberation Sans', sans-serif;font-weight:bold;color:#000;">00</div>
<div class="r" style="left:869px;top:614px;width:105px;height:22px;background:#40e0d0;border:1px solid #6a6a6a;box-sizing:border-box;"></div>
<div class="t" style="right:394.30px;top:618.69px;font-size:11px;font-family:'Liberation Sans', sans-serif;font-weight:bold;color:#000;">00</div>
<div class="r" style="left:869px;top:639px;width:106px;height:23px;background:#fff;border:1px solid #6a6a6a;box-sizing:border-box;"></div>
<div class="t" style="left:872.40px;top:643.79px;font-size:11px;font-family:'Liberation Serif', serif;font-weight:bold;color:#000;letter-spacing:0.342px;">Payment Type</div>
<svg class="r" style="left:961.0px;top:648.0px" width="10" height="6"><polyline points="1,1 5.0,5 9,1" fill="none" stroke="#606060" stroke-width="1.1"/></svg>
<div class="r" style="left:28px;top:672px;width:968px;height:36px;background:transparent;border-top:1px solid #555;border-left:1px solid #555;border-right:1px solid #555;"></div>
<div class="r" style="left:36px;top:679px;width:61px;height:25px;background:#e1e1e1;border:1px solid #adadad;box-sizing:border-box;"></div>
<div class="t" style="left:-233.50px;width:600px;text-align:center;top:684.27px;font-size:14px;font-family:'Liberation Serif', serif;font-weight:bold;color:#000;">New</div>
<div class="r" style="left:105px;top:679px;width:61px;height:25px;background:#e1e1e1;border:1px solid #adadad;box-sizing:border-box;"></div>
<div class="t" style="left:-164.50px;width:600px;text-align:center;top:684.27px;font-size:14px;font-family:'Liberation Serif', serif;font-weight:bold;color:#000;">Save</div>
<div class="r" style="left:174px;top:679px;width:61px;height:25px;background:#cccccc;border:1px solid #bfbfbf;box-sizing:border-box;"></div>
<div class="t" style="left:-95.50px;width:600px;text-align:center;top:684.27px;font-size:14px;font-family:'Liberation Serif', serif;font-weight:bold;color:#a09a10;">Update</div>
<div class="r" style="left:243px;top:679px;width:61px;height:25px;background:#cccccc;border:1px solid #bfbfbf;box-sizing:border-box;"></div>
<div class="t" style="left:-26.50px;width:600px;text-align:center;top:684.27px;font-size:14px;font-family:'Liberation Serif', serif;font-weight:bold;color:#a09a10;">Delete</div>
<div class="r" style="left:312px;top:680px;width:61px;height:25px;background:#e1e1e1;border:1px solid #adadad;box-sizing:border-box;"></div>
<div class="t" style="left:42.50px;width:600px;text-align:center;top:686.54px;font-size:11.3px;font-family:'Liberation Serif', serif;font-weight:bold;color:#000;">List</div>
<div class="r" style="left:386px;top:680px;width:80px;height:25px;background:#e1e1e1;border:1px solid #adadad;box-sizing:border-box;"></div>
<div class="t" style="left:126.00px;width:600px;text-align:center;top:686.54px;font-size:11.3px;font-family:'Liberation Serif', serif;font-weight:bold;color:#000;">E-Way Fields</div>
<div class="r" style="left:474px;top:680px;width:80px;height:25px;background:#e1e1e1;border:1px solid #adadad;box-sizing:border-box;"></div>
<div class="t" style="left:214.00px;width:600px;text-align:center;top:686.54px;font-size:11.3px;font-family:'Liberation Serif', serif;font-weight:bold;color:#000;">Create Json</div>
<div class="r" style="left:560px;top:680px;width:52px;height:25px;background:#e1e1e1;border:1px solid #adadad;box-sizing:border-box;"></div>
<div class="t" style="left:286.00px;width:600px;text-align:center;top:686.54px;font-size:11.3px;font-family:'Liberation Serif', serif;font-weight:bold;color:#000;">E-Way</div>
<div class="r" style="left:620px;top:680px;width:61px;height:25px;background:#e1e1e1;border:1px solid #adadad;box-sizing:border-box;"></div>
<div class="t" style="left:350.50px;width:600px;text-align:center;top:686.54px;font-size:11.3px;font-family:'Liberation Serif', serif;font-weight:bold;color:#000;">Slip</div>
<div class="r" style="left:693px;top:680px;width:52px;height:25px;background:#e1e1e1;border:1px solid #adadad;box-sizing:border-box;"></div>
<div class="t" style="left:419.00px;width:600px;text-align:center;top:686.54px;font-size:11.3px;font-family:'Liberation Serif', serif;font-weight:bold;color:#000;">Challan</div>
<div class="r" style="left:753px;top:680px;width:52px;height:25px;background:#e1e1e1;border:1px solid #adadad;box-sizing:border-box;"></div>
<div class="t" style="left:479.00px;width:600px;text-align:center;top:685.54px;font-size:11.3px;font-family:'Liberation Serif', serif;font-weight:bold;color:#000;">Cover</div>
<div class="r" style="left:813px;top:680px;width:49px;height:25px;background:#e1e1e1;border:1px solid #adadad;box-sizing:border-box;"></div>
<div class="t" style="left:537.50px;width:600px;text-align:center;top:686.54px;font-size:11.3px;font-family:'Liberation Serif', serif;font-weight:bold;color:#000;">Print</div>
<div class="r" style="left:870px;top:680px;width:53px;height:25px;background:#e6e6e6;border:1px solid #a8a8a8;box-sizing:border-box;"></div>
<div class="r" style="left:873px;top:683px;width:47px;height:19px;background:#97b3d3;"></div>
<div class="t" style="left:596.50px;width:600px;text-align:center;top:686.54px;font-size:11.3px;font-family:'Liberation Serif', serif;font-weight:bold;color:#000;">Exit</div>
<div class="r" style="left:929px;top:680px;width:61px;height:25px;background:#e6e6e6;border:1px solid #a8a8a8;box-sizing:border-box;"></div>
<div class="r" style="left:932px;top:683px;width:55px;height:19px;background:#00c000;"></div>
<div class="t" style="left:659.50px;width:600px;text-align:center;top:686.54px;font-size:11.3px;font-family:'Liberation Serif', serif;font-weight:bold;color:#f0ff60;">W.Bill</div>
</body></html>
